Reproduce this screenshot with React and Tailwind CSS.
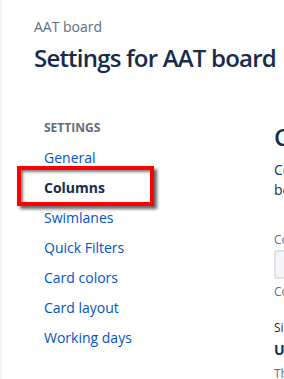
const navItems = [
  "General",
  "Columns",
  "Swimlanes",
  "Quick Filters",
  "Card colors",
  "Card layout",
  "Working days",
];

export default function App() {
  return (
    <div className="flex h-[379px] w-[284px] overflow-hidden bg-white font-['Open_Sans',sans-serif]">
      <div className="w-[2px] shrink-0 bg-[#f4f5f7]" />

      <div className="min-w-0 flex-1 pl-8 pt-[17px]">
        {/* Header */}
        <p className="text-sm leading-5 text-[#5e6c84]">AAT board</p>
        <h1 className="mt-[7px] whitespace-nowrap text-[24px] font-semibold leading-7 tracking-[-0.8px] text-[#172b4d]">
          Settings for AAT board
        </h1>

        <div className="mt-[46px] flex">
          {/* Sidebar */}
          <nav className="w-[240px] shrink-0 pl-[10px] pt-[2px]">
            <p className="mb-[6px] text-[12px] font-bold uppercase leading-4 text-[#5e6c84]">
              Settings
            </p>
            <ul>
              {navItems.map((item) => {
                const active = item === "Columns";
                return (
                  <li key={item} className="relative h-[30px] leading-[30px]">
                    <span
                      className={
                        active
                          ? "text-sm font-bold text-[#172b4d]"
                          : "text-sm text-[#0052cc]"
                      }
                    >
                      {item}
                    </span>
                    {active && (
                      <div className="absolute left-[-27px] top-[-6px] h-[40px] w-[137px] border-4 border-[#ff0000] shadow-[3px_3px_3px_rgba(0,0,0,0.6),inset_2px_2px_3px_rgba(0,0,0,0.5)]" />
                    )}
                  </li>
                );
              })}
            </ul>
          </nav>

          {/* Main content */}
          <div className="mt-[5px] min-w-0 whitespace-nowrap">
            <h2 className="text-[24px] font-semibold leading-7 text-[#172b4d]">
              Column management
            </h2>
            <p className="mt-[9px] text-sm leading-5 text-[#172b4d]">
              Columns can be added, removed, reordered and renamed.
            </p>
            <p className="text-sm leading-5 text-[#172b4d]">
              be moved between columns.
            </p>

            <p className="mt-[32px] text-xs leading-4 text-[#5e6c84]">Column constraint</p>
            <div className="mt-[2px] h-[29px] w-[200px] rounded-[3px] border-2 border-[#dfe1e6] bg-[#f4f5f7]" />
            <p className="mt-[5px] text-xs leading-4 text-[#5e6c84]">
              Constraints can be added to columns on the board.
            </p>

            <p className="mt-[20px] text-xs leading-4 text-[#172b4d]">Simplified Workflow</p>
            <p className="mt-[4px] text-sm font-bold leading-5 text-[#172b4d]">Using Jira Workflow</p>
            <p className="mt-[6px] text-xs leading-4 text-[#5e6c84]">
              This board is using a workflow.
            </p>
          </div>
        </div>
      </div>
    </div>
  );
}
